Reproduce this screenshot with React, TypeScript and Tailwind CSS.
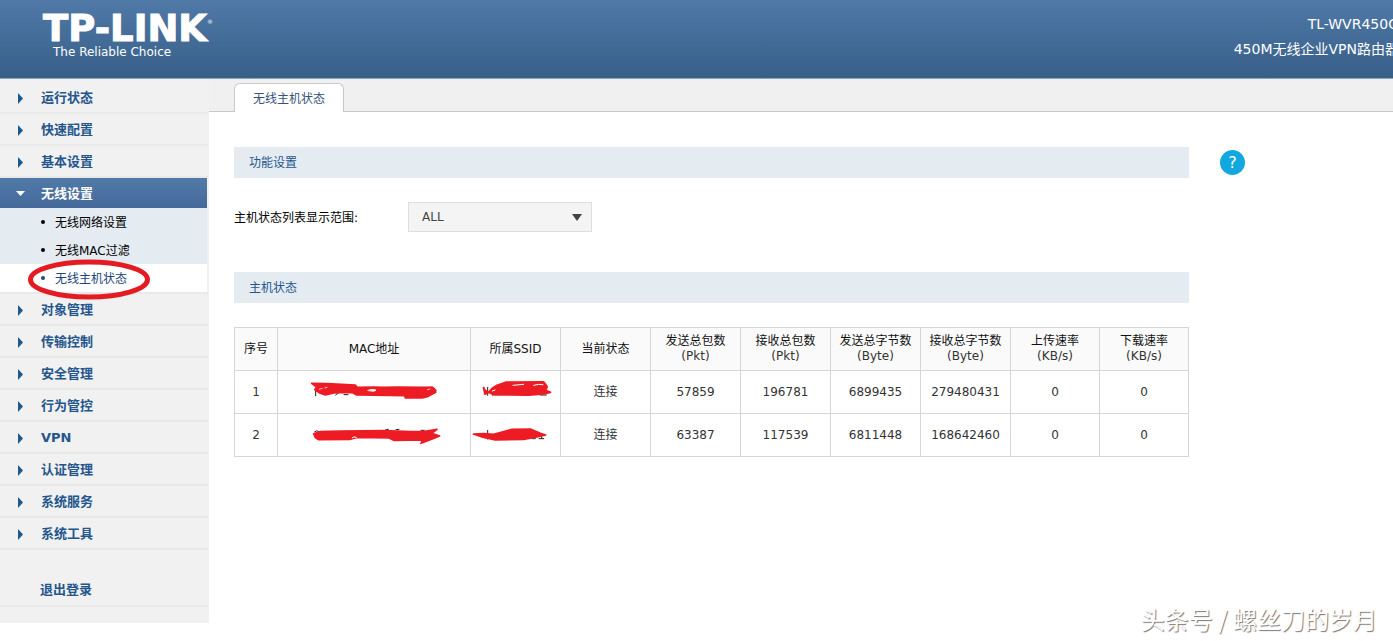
import { useState } from "react";

const menu = [
    { name: "运行状态" },
    { name: "快速配置" },
    { name: "基本设置" },
    { name: "无线设置", children: ["无线网络设置", "无线MAC过滤", "无线主机状态"] },
    { name: "对象管理" },
    { name: "传输控制" },
    { name: "安全管理" },
    { name: "行为管控" },
    { name: "VPN" },
    { name: "认证管理" },
    { name: "系统服务" },
    { name: "系统工具" },
];

const columns = [
    { title: "序号", width: "w-[43px]" },
    { title: "MAC地址", width: "w-[193px]" },
    { title: "所属SSID", width: "w-[90px]" },
    { title: "当前状态", width: "w-[90px]" },
    { title: "发送总包数", unit: "(Pkt)", width: "w-[90px]" },
    { title: "接收总包数", unit: "(Pkt)", width: "w-[90px]" },
    { title: "发送总字节数", unit: "(Byte)", width: "w-[90px]" },
    { title: "接收总字节数", unit: "(Byte)", width: "w-[90px]" },
    { title: "上传速率", unit: "(KB/s)", width: "w-[89px]" },
    { title: "下载速率", unit: "(KB/s)", width: "w-[89px]" },
];

const hosts = [
    { id: 1, mac: <MacMarkOne />, ssid: <SsidMarkOne />, values: ["连接", "57859", "196781", "6899435", "279480431", "0", "0"] },
    { id: 2, mac: <MacMarkTwo />, ssid: <SsidMarkTwo />, values: ["连接", "63387", "117539", "6811448", "168642460", "0", "0"] },
];

function MacMarkOne() {
    return <svg className="block mx-auto w-32 h-5" viewBox="238 186 384 60" strokeLinecap="round" strokeLinejoin="round">
        <path d="M255 211v16M256 212h8M315 225l9-7M340 224h12M607 221l7-4" stroke="#222" strokeWidth="3" fill="none" />
        <path d="M243 190L290 191L374 195L379 202L430 201L460 202L500 201L585 202L605 201L615 210L615 217L590 230L575 234L524 234L522 227L378 225L366 218L340 217L310 219L284 225L265 218L252 209L258 201Z" fill="#ed1c24" stroke="#ed1c24" strokeWidth="5" />
        <path d="M412 211q10-5 23-2q3 4-8 5z M266 208l9-3M282 204l7-2M590 209l8-2" fill="#fff" stroke="#fff" strokeWidth="2" />
    </svg>
}

function MacMarkTwo() {
    return <svg className="block mx-auto w-[134px] h-5" viewBox="230 314 402 60" strokeLinecap="round" strokeLinejoin="round">
        <path d="M253 334q7-6 13 0M258 352l9-1M465 329l9-2M497 328l9-1M572 330h10" stroke="#222" strokeWidth="3" fill="none" />
        <path d="M250 340L268 334L330 332L460 331L540 334L580 334L620 327L604 339L628 347L600 358L572 369L577 359L490 360L476 353L380 351L358 357L264 358L255 352Z" fill="#ed1c24" stroke="#ed1c24" strokeWidth="5" />
        <path d="M366 352q5-5 12-1" fill="none" stroke="#fff" strokeWidth="3" />
    </svg>
}

function SsidMarkOne() {
    return <svg className="block mx-auto w-[74px] h-5" viewBox="746 186 222 60" strokeLinecap="round" strokeLinejoin="round" overflow="visible">
        <path d="M772 202v24M787 226l8-8M930 225h18" stroke="#222" strokeWidth="3" fill="none" />
        <path d="M760 203L764 222L776 216L785 206L800 196L826 187L940 186L950 200L946 211L960 217L940 221L895 225L790 224L776 217" fill="#ed1c24" stroke="#ed1c24" strokeWidth="6" />
        <path d="M848 196l32-3M910 196q14-5 28-2M786 213l8-3" fill="none" stroke="#fff" strokeWidth="3" />
    </svg>
}

function SsidMarkTwo() {
    return <svg className="block mx-auto w-[88px] h-5" viewBox="725 314 264 60" strokeLinecap="round" strokeLinejoin="round">
        <path d="M772 330v26M905 355h10M926 355h14M934 340v14" stroke="#222" strokeWidth="3" fill="none" />
        <path d="M729 341L760 340L790 342L815 335L845 327L900 326L930 339L946 344L920 350L880 357L795 359L760 351Z" fill="#ed1c24" stroke="#ed1c24" strokeWidth="5" />
    </svg>
}

function Arrow({ open }: { open?: boolean }) {
    if (open) {
        return <svg className="w-[9px] h-[5px]" viewBox="0 0 9 5"><path d="M0 0h9L4.5 5z" fill="#fff" /></svg>
    }
    return <svg className="w-[5px] h-[11px] mt-[3px]" viewBox="0 0 5 11"><path d="M0 0l5 5.500L0 11z" fill="#1b5a8c" /></svg>
}

function Sidebar() {
    const [current, setCurrent] = useState("无线主机状态");

    return <nav className="w-[209px] shrink-0 bg-[#f1f1f2] pt-[3px] pb-4 pr-px">
        <ul>
            {menu.map((item) => (
                <li key={item.name} className="border-b-2 border-[#e9e9ea]">
                    <a href="#" className={item.children
                        ? "flex items-center h-[30px] mr-px text-[13px] leading-5 font-bold text-white bg-linear-to-b from-[#517aa8] to-[#44699a]"
                        : "flex items-center h-[30px] text-[13px] leading-5 font-bold text-[#24568c]"}>
                        <span className="flex justify-center w-[41px]"><Arrow open={!!item.children} /></span>
                        <span className="pt-px">{item.name}</span>
                    </a>
                    {item.children && <ul className="mr-px bg-[#e4ecf2]">
                        {item.children.map((child) => (
                            <li key={child} className={child === current ? "relative bg-white text-[#23447c]" : "text-black"}>
                                <a href="#" className="flex items-center h-7 pl-[41px] text-xs" onClick={() => setCurrent(child)}>
                                    <span className="w-1 h-1 mr-[10px] rounded-full bg-current"></span>
                                    <span className="pt-px">{child}</span>
                                </a>
                                {child === "无线主机状态" && <svg className="absolute left-7 -top-[5px] w-[122px] h-[41px] pointer-events-none" viewBox="0 0 122 41">
                                    <ellipse cx="61" cy="20.500" rx="58.500" ry="17.500" fill="none" stroke="#e31b23" strokeWidth="5" />
                                </svg>}
                            </li>
                        ))}
                    </ul>}
                </li>
            ))}
            <li className="mt-[25px] border-b-2 border-[#e9e9ea]">
                <a href="#" className="flex items-center h-[30px] pl-10 text-[13px] font-bold text-[#24568c]">退出登录</a>
            </li>
        </ul>
    </nav>
}

export default function App() {
    const [range, setRange] = useState("ALL");

    return <div className="relative min-h-screen overflow-x-hidden bg-white font-['DejaVu_Sans','Noto_Sans_CJK_SC',sans-serif] text-xs text-[#333]">
        <header className="flex justify-between h-[79px] pl-[43px] overflow-hidden text-white bg-linear-to-b from-[#5079a8] to-[#375f88] border-b border-[#8ea5bb]">
            <div className="pt-3">
                <div className="flex items-start">
                    <span className="text-[37px] leading-[34px] font-bold [-webkit-text-stroke:1px_white]">TP-LINK</span>
                    <span className="pt-1 text-[6px] leading-3">®</span>
                </div>
                <p className="pl-[10px] text-xs leading-3">The Reliable Choice</p>
            </div>
            <div className="-mr-[6px] pt-3 text-right text-sm leading-[25px] whitespace-nowrap">
                <p>TL-WVR450G</p>
                <p>450M无线企业VPN路由器</p>
            </div>
        </header>
        <div className="flex items-start">
            <Sidebar />
            <main className="flex-1 min-w-0">
                <div className="flex items-end h-[33px] pl-[25px] bg-[#f0f0f0] border-b border-[#c8c8c8]">
                    <button className="h-[29px] px-[18px] pt-[2px] -mb-px bg-white border border-b-0 border-[#c8c8c8] rounded-t-md text-xs text-[#36527c]">无线主机状态</button>
                </div>
                <div className="flex items-start gap-[31px] pt-[35px] pl-[25px] pr-[148px]">
                    <div className="flex-1 min-w-0">
                        <h2 className="h-[31px] pl-[15px] leading-[33px] bg-[#e4ecf2] text-[#24568c]">功能设置</h2>
                        <div className="flex items-center py-6 mb-4">
                            <label htmlFor="range" className="w-[174px] pt-[2px] text-black">主机状态列表显示范围:</label>
                            <div className="relative w-[184px]">
                                <select id="range" value={range} onChange={(e) => setRange(e.target.value)} className="block w-full h-[30px] pl-[13px] appearance-none bg-[#f4f4f4] border border-[#dedede] text-[#444] outline-none">
                                    <option value="ALL">ALL</option>
                                </select>
                                <svg className="absolute right-[10px] top-3 w-[10px] h-[7px] pointer-events-none" viewBox="0 0 10 7"><path d="M0 0h10L5 7z" fill="#444" /></svg>
                            </div>
                        </div>
                        <h2 className="h-[31px] pl-[15px] leading-[33px] bg-[#e4ecf2] text-[#24568c]">主机状态</h2>
                        <table className="w-full mt-6 table-fixed border-collapse text-center">
                            <thead>
                                <tr className="h-[43px] bg-[#fafafa]">
                                    {columns.map((col) => (
                                        <th key={col.title} className={`${col.width} p-0 border border-[#d6d6d6] font-normal leading-[15px] whitespace-nowrap`}>
                                            <span className="text-[#111]">{col.title}</span>
                                            {col.unit && <span className="block">{col.unit}</span>}
                                        </th>
                                    ))}
                                </tr>
                            </thead>
                            <tbody>
                                {hosts.map((host) => (
                                    <tr key={host.id} className="h-[43px]">
                                        <td className="p-0 border border-[#d6d6d6]">{host.id}</td>
                                        <td className="p-0 border border-[#d6d6d6]">{host.mac}</td>
                                        <td className="p-0 border border-[#d6d6d6]">{host.ssid}</td>
                                        {host.values.map((value, i) => (
                                            <td key={i} className="p-0 border border-[#d6d6d6]">{value}</td>
                                        ))}
                                    </tr>
                                ))}
                            </tbody>
                        </table>
                    </div>
                    <button aria-label="帮助" className="mt-[3px] w-[25px] h-[25px] rounded-full bg-[#12a8df] text-base leading-[25px] text-white">?</button>
                </div>
            </main>
        </div>
        <p className="absolute bottom-1 right-4 text-2xl leading-9 text-white font-['Noto_Sans_CJK_SC',sans-serif] [text-shadow:1px_1px_1px_#777] whitespace-nowrap">头条号 / 螺丝刀的岁月</p>
    </div>
}
